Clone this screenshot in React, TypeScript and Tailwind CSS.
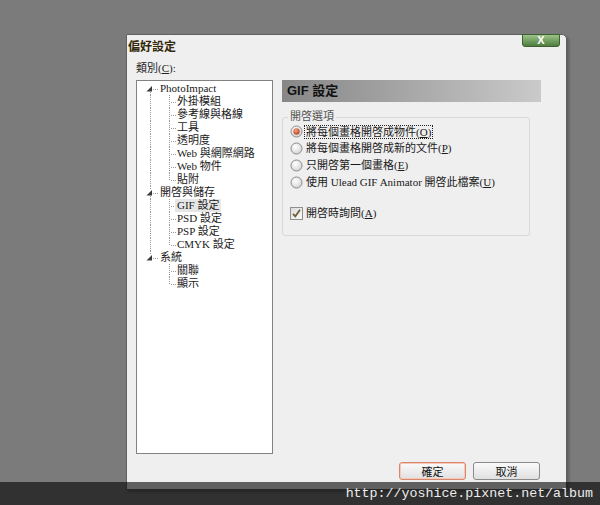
import type { ReactNode } from 'react'

const serif = "font-['Liberation_Serif','Noto_Sans_CJK_TC',serif]"

const tree = [
  {
    label: 'PhotoImpact',
    children: ['外掛模組', '參考線與格線', '工具', '透明度', 'Web 與網際網路', 'Web 物件', '貼附'],
  },
  { label: '開啓與儲存', children: ['GIF 設定', 'PSD 設定', 'PSP 設定', 'CMYK 設定'] },
  { label: '系統', children: ['關聯', '顯示'] },
]

const dot = { stroke: '#9a9a9a', strokeWidth: 1, strokeDasharray: '1 1' }

function RootCell({ first, last }: { first: boolean; last: boolean }) {
  return (
    <svg width="15" height="13" className="shrink-0">
      {!first && <line x1="5.5" y1="0" x2="5.5" y2="4" {...dot} />}
      {!last && <line x1="5.5" y1="10" x2="5.5" y2="13" {...dot} />}
      <polygon points="7,4 7,9.5 1.5,9.5" fill="#3a3a3a" />
      <line x1="8" y1="7.5" x2="14" y2="7.5" {...dot} />
    </svg>
  )
}

function ChildCells({ trunk, lastChild }: { trunk: boolean; lastChild: boolean }) {
  return (
    <>
      <svg width="15" height="13" className="shrink-0">
        {trunk && <line x1="5.5" y1="0" x2="5.5" y2="13" {...dot} />}
      </svg>
      <svg width="17" height="13" className="shrink-0">
        <line x1="9.5" y1="0" x2="9.5" y2={lastChild ? 7 : 13} {...dot} />
        <line x1="11" y1="7.5" x2="16" y2="7.5" {...dot} />
      </svg>
    </>
  )
}

function Radio({ checked }: { checked?: boolean }) {
  return (
    <svg width="13" height="13" className="shrink-0">
      <defs>
        <radialGradient id="rg" cx="0.4" cy="0.35" r="0.7">
          <stop offset="0" stopColor="#ffffff" />
          <stop offset="1" stopColor="#d2d2d2" />
        </radialGradient>
        <radialGradient id="rd" cx="0.4" cy="0.35" r="0.7">
          <stop offset="0" stopColor="#f0a080" />
          <stop offset="1" stopColor="#b8401f" />
        </radialGradient>
      </defs>
      <circle cx="6.5" cy="6.5" r="5.5" fill="url(#rg)" stroke="#8b8b8b" />
      {checked && <circle cx="6.5" cy="6.5" r="3.2" fill="url(#rd)" />}
    </svg>
  )
}

function Key({ children }: { children: ReactNode }) {
  return <span className="underline underline-offset-[1px]">{children}</span>
}

export default function App() {
  return (
    <div className="relative h-[505px] w-[600px] overflow-hidden bg-[#7b7b7b] pt-[34px] pl-[126px]">
      {/* dialog */}
      <div className="relative h-[456px] w-[441px] rounded-tr-[5px] border border-[#606060] bg-[#efefef] shadow-[2px_2px_3px_rgba(0,0,0,0.25)]">
        <div className="flex h-[21px] items-center pl-[1px] text-[12px] font-bold text-[#33290a] font-['Noto_Sans_CJK_TC',sans-serif]">
          偏好設定
        </div>
        <div className="absolute -top-px right-[6px] flex h-[13px] w-[38px] items-center justify-center rounded-b-[3px] border border-[#3f6030] bg-gradient-to-b from-[#9cc48a] to-[#4f7d3f] text-[11px] font-bold leading-none text-white font-['Liberation_Sans',sans-serif]">
          X
        </div>

        <div className={`flex h-[24px] items-center pl-[9px] text-[11px] text-[#222] ${serif}`}>
          類別(<Key>C</Key>):
        </div>

        <div className="flex pl-[9px]">
          {/* tree */}
          <div className={`h-[374px] w-[137px] border border-[#828282] bg-white pt-[1px] pl-[8px] text-[11px] text-[#1a1a1a] ${serif}`}>
            {tree.map((root, ri) => (
              <div key={root.label}>
                <div className="flex h-[13px] items-center">
                  <RootCell first={ri === 0} last={ri === tree.length - 1} />
                  <span className="leading-[13px]">{root.label}</span>
                </div>
                {root.children.map((c, ci) => (
                  <div key={c} className="flex h-[13px] items-center">
                    <ChildCells trunk={ri < tree.length - 1} lastChild={ci === root.children.length - 1} />
                    <span className={`leading-[13px] ${c === 'GIF 設定' ? '-ml-[2px] bg-[#e6e6e6] px-[2px]' : ''}`}>
                      {c}
                    </span>
                  </div>
                ))}
              </div>
            ))}
          </div>

          {/* right panel */}
          <div className="ml-[9px] w-[259px]">
            <div className="flex h-[22px] items-center bg-gradient-to-r from-[#878787] to-[#cacaca] pl-[5px] text-[13px] font-bold text-[#111] font-['Liberation_Sans','Noto_Sans_CJK_TC',sans-serif]">
              GIF 設定
            </div>

            <div className={`relative mt-[15px] w-[248px] rounded-[3px] border border-[#d3d9dc] pt-[5px] pb-[13px] pl-[7px] text-[11px] text-[#1a1a1a] ${serif}`}>
              <div className="absolute -top-[8px] left-[5px] bg-[#efefef] px-[2px] leading-[13px] text-[#555]">
                開啓選項
              </div>
              <div className="flex h-[17px] items-center gap-[1px]">
                <Radio checked />
                <span className="border border-dotted border-[#222] px-[1px] leading-[12px]">
                  將每個畫格開啓成物件(<Key>O</Key>)
                </span>
              </div>
              <div className="flex h-[17px] items-center gap-[2px]">
                <Radio />
                <span className="pl-[1px]">將每個畫格開啓成新的文件(<Key>P</Key>)</span>
              </div>
              <div className="flex h-[17px] items-center gap-[2px]">
                <Radio />
                <span className="pl-[1px]">只開啓第一個畫格(<Key>E</Key>)</span>
              </div>
              <div className="flex h-[17px] items-center gap-[2px]">
                <Radio />
                <span className="pl-[1px]">使用 Ulead GIF Animator 開啓此檔案(<Key>U</Key>)</span>
              </div>
              <div className="mt-[14px] flex h-[17px] items-center gap-[2px]">
                <svg width="13" height="13" className="shrink-0">
                  <defs>
                    <linearGradient id="cb" x1="0" y1="0" x2="1" y2="1">
                      <stop offset="0" stopColor="#dcdcdc" />
                      <stop offset="1" stopColor="#fafafa" />
                    </linearGradient>
                  </defs>
                  <rect x="0.5" y="0.5" width="12" height="12" fill="url(#cb)" stroke="#8e8f8f" />
                  <path d="M3 6.8 L5.3 9.3 L10 2.8" fill="none" stroke="#6b5c34" strokeWidth="1.7" />
                </svg>
                <span className="pl-[1px]">開啓時詢問(<Key>A</Key>)</span>
              </div>
            </div>
          </div>
        </div>

        {/* buttons */}
        <div className="mt-[8px] flex justify-end gap-[7px] pr-[26px] text-[11px] text-[#111] font-['Noto_Sans_CJK_TC',sans-serif]">
          <button className="flex h-[18px] w-[67px] items-center justify-center rounded-[3px] border border-[#d9866c] bg-gradient-to-b from-[#fafafa] to-[#e0e0e0] shadow-[inset_0_0_0_1px_#f6c8b8]">
            確定
          </button>
          <button className="flex h-[18px] w-[67px] items-center justify-center rounded-[3px] border border-[#8a8a8a] bg-gradient-to-b from-[#fafafa] to-[#e0e0e0]">
            取消
          </button>
        </div>
      </div>

      {/* watermark bar */}
      <div className="absolute bottom-0 left-0 flex h-[23px] w-full items-center justify-end bg-black/60 pr-[7px] text-[13.3px] text-[#ececec] font-['Liberation_Mono',monospace]">
        http://yoshice.pixnet.net/album
      </div>
    </div>
  )
}
